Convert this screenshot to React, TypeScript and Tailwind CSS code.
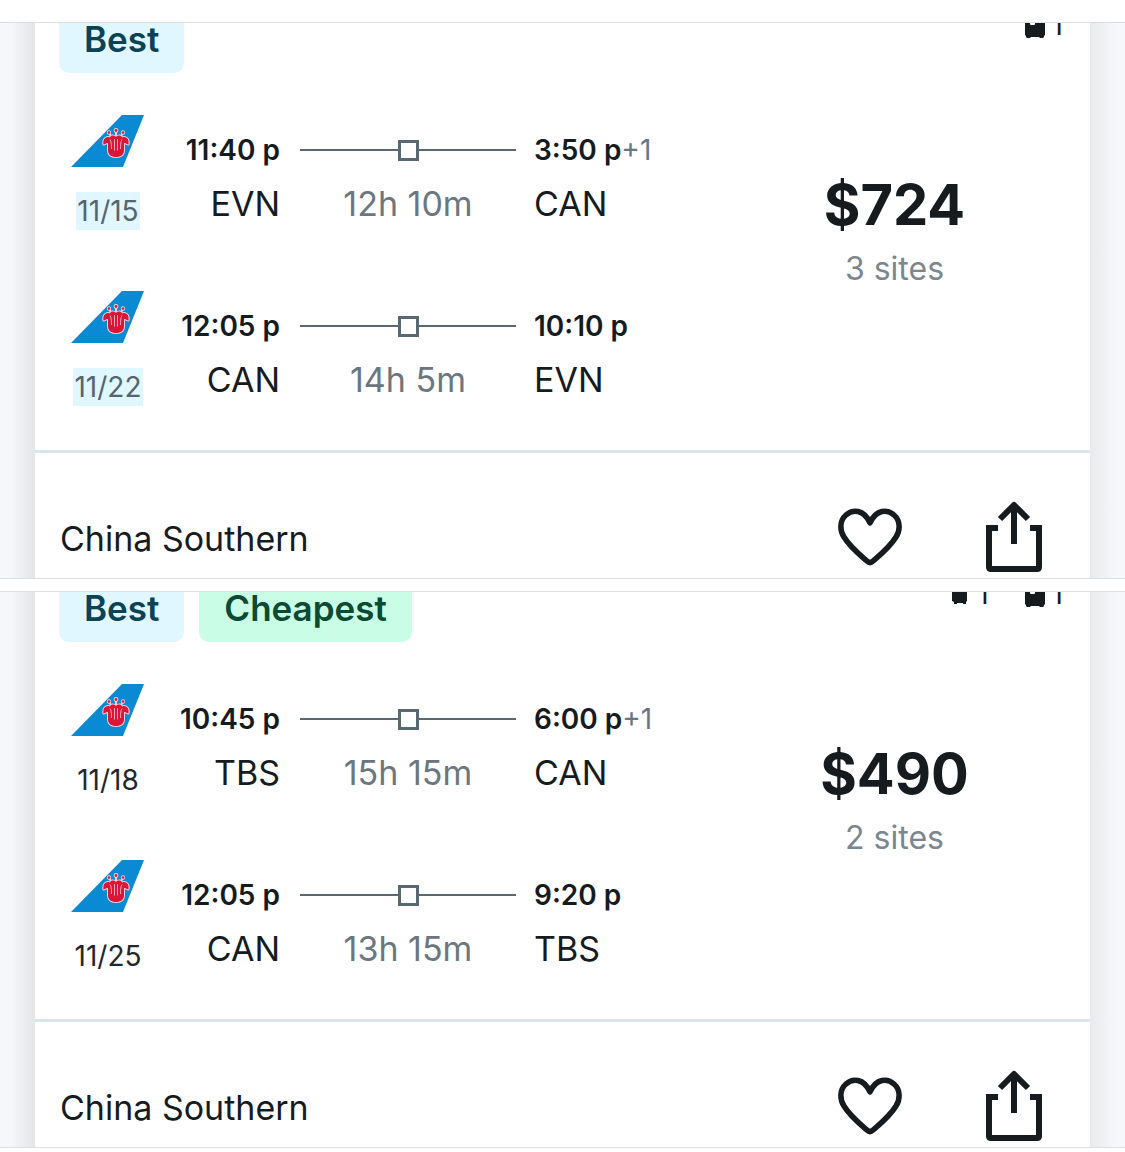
import React from "react";

type Leg = {
  date: string;
  highlighted?: boolean;
  depart: string;
  from: string;
  duration: string;
  arrive: string;
  plus?: string;
  to: string;
};

type Flight = {
  badges: { label: string; tone: "blue" | "green" }[];
  bags: ("carry" | "checked")[];
  legs: Leg[];
  price: string;
  sites: string;
  airline: string;
};

const flights: Flight[] = [
  {
    badges: [{ label: "Best", tone: "blue" }],
    bags: ["checked"],
    legs: [
      { date: "11/15", highlighted: true, depart: "11:40 p", from: "EVN", duration: "12h 10m", arrive: "3:50 p", plus: "+1", to: "CAN" },
      { date: "11/22", highlighted: true, depart: "12:05 p", from: "CAN", duration: "14h 5m", arrive: "10:10 p", to: "EVN" },
    ],
    price: "$724",
    sites: "3 sites",
    airline: "China Southern",
  },
  {
    badges: [
      { label: "Best", tone: "blue" },
      { label: "Cheapest", tone: "green" },
    ],
    bags: ["carry", "checked"],
    legs: [
      { date: "11/18", depart: "10:45 p", from: "TBS", duration: "15h 15m", arrive: "6:00 p", plus: "+1", to: "CAN" },
      { date: "11/25", depart: "12:05 p", from: "CAN", duration: "13h 15m", arrive: "9:20 p", to: "TBS" },
    ],
    price: "$490",
    sites: "2 sites",
    airline: "China Southern",
  },
];

const petals =
  "M32.500 30.500C31.500 25 35 22 39 23.500C40 21 43 21 45 23C47 21 50 21 51 23.500C55 22 58.500 25 57.500 30.500C55.500 30.500 55 28.500 53 29V36C53 41 49.500 43 45 43C40.500 43 37 41 37 36V29C35 28.500 34.500 30.500 32.500 30.500Z";

function TailLogo() {
  return (
    <svg width="74" height="54" viewBox="0 0 74 54" role="img" aria-label="China Southern tail">
      <path d="M51 1H73L52 53H0Z" fill="#0a8ad2" />
      <g stroke="#efd3e4" strokeWidth="2" fill="#efd3e4" strokeLinejoin="round">
        <path d={petals} />
        <circle cx="38" cy="18.500" r="1.200" />
        <circle cx="45" cy="16.500" r="1.400" />
        <circle cx="52" cy="18.500" r="1.200" />
        <path d="M39 20l1 3M45 18v4M51 20l-1 3" />
      </g>
      <g fill="#dc1535">
        <path d={petals} />
        <circle cx="38" cy="18.500" r="1.300" />
        <circle cx="45" cy="16.500" r="1.400" />
        <circle cx="52" cy="18.500" r="1.300" />
      </g>
      <path d="M39 25.500c1.500 2 1.500 7 1.500 9.500M51 25.500c-1.500 2-1.500 7-1.500 9.500M43.500 25v11.500M46.500 25v11.500" fill="none" stroke="#f0b9c9" strokeWidth="0.900" />
    </svg>
  );
}

function Bag({ kind }: { kind: "carry" | "checked" }) {
  if (kind === "carry") {
    return (
      <svg width="20" height="33" viewBox="0 0 20 33" className="shrink-0" aria-hidden="true">
        <path d="M7 8V1h6v7" fill="none" stroke="#161b1f" strokeWidth="2" />
        <path d="M3 8h13q1 0 1 1v18l-1 1v2h-3v-1H7v1H4v-2l-2-1V9q0-1 1-1z" fill="#161b1f" />
      </svg>
    );
  }
  return (
    <svg width="20" height="32" viewBox="0 0 20 32" className="shrink-0" aria-hidden="true">
      <path d="M6 7V1h8v6" fill="none" stroke="#161b1f" strokeWidth="2" />
      <path d="M1 7h18q1 0 1 1v21l-1 1v1l-1 1h-3l-1-1H6l-1 1H2l-1-1v-1l-1-1V8q0-1 1-1z" fill="#161b1f" />
      <rect x="5" y="13" width="5" height="6" rx="1" fill="#fff" />
    </svg>
  );
}

function Route() {
  return (
    <div className="flex h-[22px] items-center" aria-hidden="true">
      <span className="h-[2px] flex-1 bg-[#5a6872]" />
      <span className="size-[21px] border-[3px] border-[#5a6872] bg-white" />
      <span className="h-[2px] flex-1 bg-[#5a6872]" />
    </div>
  );
}

function LegRow({ leg }: { leg: Leg }) {
  return (
    <div className="grid grid-cols-[96px_124px_254px_1fr] items-start">
      <div className="flex flex-col items-center gap-[24px]">
        <TailLogo />
        <span
          className={
            leg.highlighted
              ? "bg-[#e0f7ff] px-px text-[28px] leading-[38px] text-[#56646e]"
              : "px-px text-[28px] leading-[38px] text-[#22282d]"
          }
        >
          {leg.date}
        </span>
      </div>
      <div className="flex flex-col items-end gap-[14px] pt-[16px] whitespace-nowrap">
        <span className="text-[28px] leading-[40px] font-semibold">{leg.depart}</span>
        <span className="text-[34px] leading-[40px]">{leg.from}</span>
      </div>
      <div className="flex flex-col gap-[23px] pt-[25px] pr-[18px] pl-[20px]">
        <Route />
        <span className="text-center text-[34px] leading-[40px] whitespace-nowrap text-[#6b7780]">{leg.duration}</span>
      </div>
      <div className="flex flex-col gap-[14px] pt-[16px] whitespace-nowrap">
        <span className="text-[28px] leading-[40px] font-semibold">
          {leg.arrive}
          {leg.plus && <span className="font-normal text-[#6b7780]">{leg.plus}</span>}
        </span>
        <span className="text-[34px] leading-[40px]">{leg.to}</span>
      </div>
    </div>
  );
}

function FlightPanel({ flight }: { flight: Flight }) {
  return (
    <section className="flex overflow-hidden border-y border-[#dcdfe1]">
      <div className="w-[35px] shrink-0 bg-linear-to-r from-[#f5f7fa] from-30% to-[#e3e5e7]" />
      <article className="min-w-0 flex-1 bg-white">
        <header className="flex items-start justify-between pr-[27px] pl-[24px]">
          <div className="flex gap-[15px]">
            {flight.badges.map((b) => (
              <span
                key={b.label}
                className={
                  b.tone === "blue"
                    ? "rounded-b-[10px] bg-[#e0f7ff] px-[25px] pb-[18px] text-[35px] leading-[32px] font-semibold text-[#0b4256]"
                    : "rounded-b-[10px] bg-[#cafde5] px-[25px] pb-[18px] text-[35px] leading-[32px] font-semibold text-[#0b4a33]"
                }
              >
                {b.label}
              </span>
            ))}
          </div>
          <div className="flex h-[15px] items-end gap-[36px] overflow-hidden">
            {flight.bags.map((kind) => (
              <span key={kind} className="flex items-end gap-[7px]">
                <Bag kind={kind} />
                <span className="text-[28px] leading-[26px]">1</span>
              </span>
            ))}
          </div>
        </header>
        <div className="grid grid-cols-[1fr_391px] pt-[41px] pb-[44px]">
          <div className="flex flex-col gap-[60px] pl-[25px]">
            {flight.legs.map((leg) => (
              <LegRow key={leg.date} leg={leg} />
            ))}
          </div>
          <div className="flex flex-col items-center pt-[57px]">
            <strong className="text-[56px] leading-[68px] font-bold">{flight.price}</strong>
            <span className="mt-[10px] text-[32px] leading-[40px] text-[#7b868e]">{flight.sites}</span>
          </div>
        </div>
        <footer className="flex items-start justify-between border-t-[3px] border-[#dbe5ec] pr-[46px] pb-[5px] pl-[25px]">
          <span className="pt-[66px] text-[34px] leading-[40px]">{flight.airline}</span>
          <div className="flex gap-[80px] pt-[48px]">
            <button type="button" aria-label="Save" className="h-[72px]">
              <svg width="68" height="72" viewBox="0 0 68 72" fill="none" stroke="#161b1f" strokeWidth="5.500" strokeLinejoin="round">
                <path d="M34 22C28 8 16 8 10 14C3 20 4 30 8 36C14 46 24 54 31 60Q34 63 37 60C44 54 54 46 60 36C64 30 65 20 58 14C52 8 40 8 34 22Z" />
              </svg>
            </button>
            <button type="button" aria-label="Share" className="h-[72px]">
              <svg width="60" height="72" viewBox="0 0 60 72" fill="none" stroke="#161b1f" strokeWidth="6">
                <path d="M14 27H5V66Q5 68 7 68H53Q55 68 55 66V27H46" />
                <path d="M30 43V5M16 18L30 4L44 18" strokeLinejoin="round" />
              </svg>
            </button>
          </div>
        </footer>
      </article>
      <div className="w-[35px] shrink-0 bg-linear-to-l from-[#f5f7fa] from-30% to-[#e8eaec]" />
    </section>
  );
}

export default function App() {
  return (
    <main className="flex flex-col gap-[12px] bg-white pt-[22px] pb-[3px] font-['Inter',sans-serif] text-[#161b1f]">
      {flights.map((f) => (
        <FlightPanel key={f.price} flight={f} />
      ))}
    </main>
  );
}
